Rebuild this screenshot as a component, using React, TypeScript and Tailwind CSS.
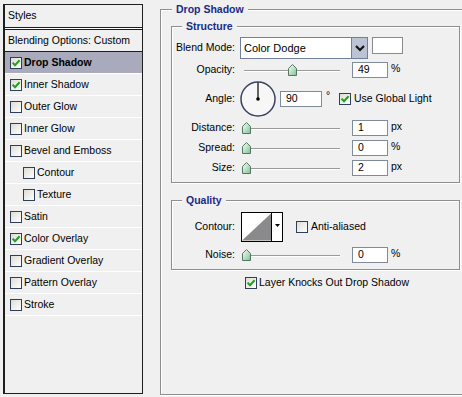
import React from "react";

type Effect = { label: string; checked?: boolean; active?: boolean; indent?: boolean };

const EFFECTS: Effect[] = [
    { label: "Drop Shadow", checked: true, active: true },
    { label: "Inner Shadow", checked: true },
    { label: "Outer Glow" },
    { label: "Inner Glow" },
    { label: "Bevel and Emboss" },
    { label: "Contour", indent: true },
    { label: "Texture", indent: true },
    { label: "Satin" },
    { label: "Color Overlay", checked: true },
    { label: "Gradient Overlay" },
    { label: "Pattern Overlay" },
    { label: "Stroke" },
];

function CheckBox({ checked }: { checked?: boolean }) {
    return (
        <span className="flex h-[12px] w-[12px] shrink-0 items-center justify-center border border-[#2f3f57] bg-gradient-to-br from-[#dedcd4] to-white">
            {checked && (
                <svg width="10" height="10" viewBox="0 0 10 10">
                    <path d="M1.6 4.6 L4 7.2 L8.6 2.2" fill="none" stroke="#21a121" strokeWidth="2" />
                </svg>
            )}
        </span>
    );
}

function Thumb() {
    return (
        <svg width="9" height="12" viewBox="0 0 9 12">
            <defs>
                <linearGradient id="thumbFill" x1="0" y1="0" x2="1" y2="1">
                    <stop offset="0" stopColor="#ffffff" />
                    <stop offset="1" stopColor="#7fbf8e" />
                </linearGradient>
            </defs>
            <path d="M0.5 4.5 L4.5 0.5 L8.5 4.5 L8.5 11.5 L0.5 11.5 Z" fill="url(#thumbFill)" stroke="#4f7a5f" />
        </svg>
    );
}

// thumb offset is a data value, so inline style
function Slider({ at }: { at: number }) {
    return (
        <div className="relative h-[16px] w-[108px]">
            <div className="absolute left-[4px] top-[8px] h-[2px] w-[96px] border-t border-[#9a9a9a] border-b border-b-white" />
            <div className="absolute top-[2px]" style={{ left: at }}>
                <Thumb />
            </div>
        </div>
    );
}

function Field({ value, w = "w-[36px]" }: { value: string; w?: string }) {
    return (
        <div className={`flex h-[16px] ${w} items-center border border-[#7f8a9b] bg-white pl-[5px]`}>
            {value}
        </div>
    );
}

function SliderRow({ label, at, value, unit }: { label: string; at: number; value: string; unit: string }) {
    return (
        <div className="flex h-[16px] items-center">
            <div className="w-[63px] text-right">{label}</div>
            <div className="ml-[5px] flex items-center">
                <Slider at={at} />
                <div className="ml-[4px]">
                    <Field value={value} />
                </div>
                <span className="ml-[3px] self-start leading-[13px]">{unit}</span>
            </div>
        </div>
    );
}

function Group({ title, className, children }: { title: string; className: string; children: React.ReactNode }) {
    return (
        <fieldset className={`border border-[#8e8e8e] shadow-[inset_1px_1px_0_#fff,1px_1px_0_#fff] ${className}`}>
            <legend className="bg-[#f0f0f0] px-[4px] text-[10.5px] font-bold leading-[14px] text-[#1b2a86]">
                {title}
            </legend>
            {children}
        </fieldset>
    );
}

export default function App() {
    return (
        <div className="flex h-[397px] w-[462px] overflow-hidden bg-[#f0f0f0] font-['Liberation_Sans',Arial,sans-serif] text-[10.5px] text-black">
            {/* styles list */}
            <div className="ml-[3px] mt-[4px] flex h-[390px] w-[140px] shrink-0 flex-col border border-l-2 border-[#1e1e1e]">
                <div className="flex h-[22px] items-center pl-[3px]">Styles</div>
                <div className="h-[3px] border-y border-[#1e1e1e] bg-white" />
                <div className="flex h-[22px] items-center border-b border-[#1e1e1e] pl-[3px]">
                    Blending Options: Custom
                </div>
                {EFFECTS.map((e) => (
                    <div
                        key={e.label}
                        className={`flex h-[22px] items-center gap-[2px] border-b border-white ${
                            e.indent ? "pl-[18px]" : "pl-[5px]"
                        } ${e.active ? "bg-[#a9aabc] font-bold" : ""}`}
                    >
                        <CheckBox checked={e.checked} />
                        <span>{e.label}</span>
                    </div>
                ))}
            </div>

            {/* options */}
            <Group title="Drop Shadow" className="ml-[17px] mt-[2px] h-[393px] w-[320px] shrink-0 pl-[10px] [&>legend]:ml-[1px]">
                <Group title="Structure" className="mt-[3px] h-[164px] w-[289px] [&>legend]:ml-[10px]">
                    <div className="mt-[4px] flex h-[22px] items-center">
                        <div className="w-[63px] text-right">Blend Mode:</div>
                        <div className="ml-[5px] flex h-[22px] w-[128px] border border-[#6f7f9c] bg-white">
                            <span className="flex flex-1 items-center pl-[3px] text-[11px]">Color Dodge</span>
                            <span className="flex w-[16px] items-center justify-center border-l border-[#6f7f9c] bg-[#bcc3d5]">
                                <svg width="10" height="8" viewBox="0 0 10 8">
                                    <path d="M1 2 L5 6 L9 2" fill="none" stroke="#111" strokeWidth="2.2" />
                                </svg>
                            </span>
                        </div>
                        <div className="ml-[4px] h-[17px] w-[31px] self-start border border-[#8a8a8a] bg-white" />
                    </div>

                    <div className="mt-[3px]">
                        <SliderRow label="Opacity:" at={48} value="49" unit="%" />
                    </div>

                    <div className="mt-[3px] flex h-[36px] items-center">
                        <div className="w-[63px] text-right">Angle:</div>
                        <svg className="ml-[5px]" width="36" height="36" viewBox="0 0 36 36">
                            <circle cx="18" cy="18" r="17" fill="#f7f7f7" stroke="#3a4363" strokeWidth="1.5" />
                            <line x1="18" y1="18" x2="18" y2="1.5" stroke="#000" strokeWidth="1.2" />
                            <circle cx="18" cy="18" r="1.8" fill="#000" />
                        </svg>
                        <div className="ml-[4px]">
                            <Field value="90" w="w-[42px]" />
                        </div>
                        <span className="w-[17px] self-start pl-[4px] pt-[9px] leading-[11px]">°</span>
                        <CheckBox checked />
                        <span className="ml-[3px]">Use Global Light</span>
                    </div>

                    <div className="mt-[3px]">
                        <SliderRow label="Distance:" at={2} value="1" unit="px" />
                    </div>
                    <div className="mt-[4px]">
                        <SliderRow label="Spread:" at={2} value="0" unit="%" />
                    </div>
                    <div className="mt-[4px]">
                        <SliderRow label="Size:" at={2} value="2" unit="px" />
                    </div>
                </Group>

                <Group title="Quality" className="mt-[10px] h-[77px] w-[289px] [&>legend]:ml-[10px]">
                    <div className="mt-[5px] flex h-[30px] items-center">
                        <div className="w-[63px] text-right">Contour:</div>
                        <div className="ml-[6px] flex h-[30px] border border-black bg-white">
                            <svg width="30" height="28" viewBox="0 0 30 28" className="border-r border-black">
                                <rect width="30" height="28" fill="#fff" />
                                <path d="M0 28 L30 0 L30 28 Z" fill="#8a8a8c" />
                            </svg>
                            <span className="flex w-[10px] items-start justify-center pt-[11px]">
                                <svg width="5" height="3" viewBox="0 0 5 3">
                                    <path d="M0 0 H5 L2.5 3 Z" fill="#000" />
                                </svg>
                            </span>
                        </div>
                        <div className="ml-[13px] flex items-center">
                            <CheckBox />
                            <span className="ml-[3px]">Anti-aliased</span>
                        </div>
                    </div>
                    <div className="mt-[5px]">
                        <SliderRow label="Noise:" at={2} value="0" unit="%" />
                    </div>
                </Group>

                <div className="ml-[74px] mt-[6px] flex h-[13px] items-center gap-[2px]">
                    <CheckBox checked />
                    <span>Layer Knocks Out Drop Shadow</span>
                </div>
            </Group>
        </div>
    );
}
